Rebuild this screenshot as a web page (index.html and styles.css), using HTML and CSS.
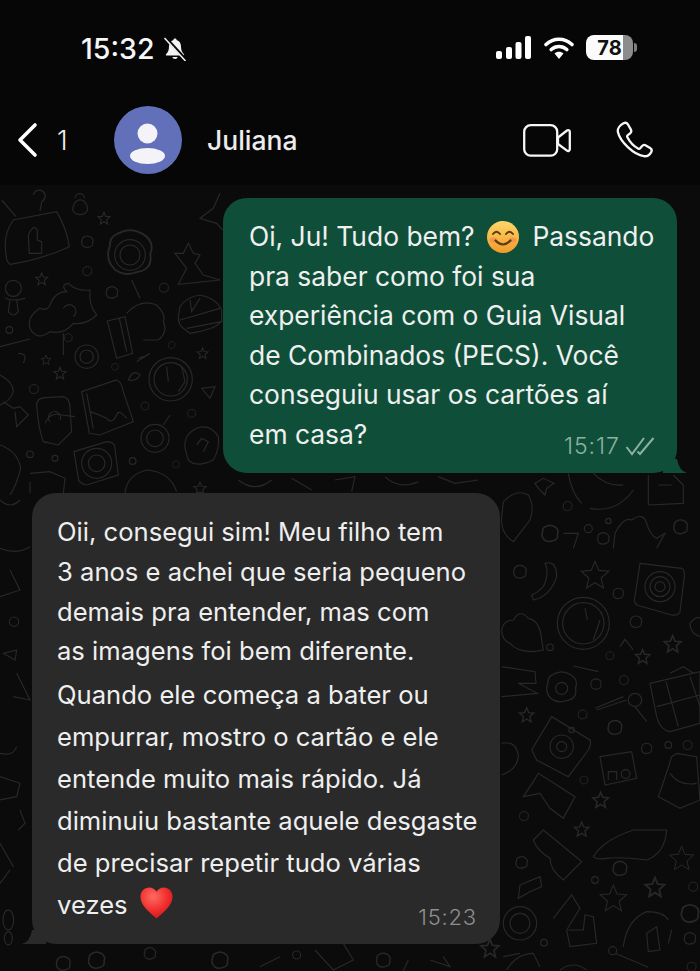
FILE: index.html
```html
<!DOCTYPE html>
<html lang="pt-BR">
<head>
    <meta charset="UTF-8">
    <meta name="viewport" content="width=device-width, initial-scale=1.0">
    <title>Juliana</title>
    <link rel="stylesheet" href="styles.css">
</head>
<body>
    <div class="phone">
        <div class="top-area">
            <div class="status-bar">
                <div class="status-left">
                    <span class="status-time">15:32</span>
                    <svg class="bell" viewBox="0 0 24 24" width="24" height="24">
                        <path d="M12 1.500c-.9 0-1.500.6-1.600 1.400C7.600 3.700 6 6 6 9.500c0 3.800-1 5.700-3 7.700-.5.500-.1 1.300.6 1.300h16.800c.7 0 1.100-.8.6-1.300-2-2-3-3.900-3-7.700C18 6 16.400 3.700 13.600 2.900c-.1-.8-.7-1.400-1.600-1.400z" fill="#f4f4f4"/>
                        <path d="M9.300 20a2.800 2.800 0 0 0 5.400 0z" fill="#f4f4f4"/>
                        <path d="M2.500 .5 L23.500 23.500" stroke="#060606" stroke-width="3"/>
                        <path d="M1.500 1 L22.500 24" stroke="#f4f4f4" stroke-width="1.500"/>
                    </svg>
                </div>
                <div class="status-right">
                    <svg viewBox="0 0 35 23" width="35" height="23">
                        <rect x="0" y="15" width="6" height="8" rx="2" fill="#fff"/>
                        <rect x="10" y="11" width="6" height="12" rx="2" fill="#fff"/>
                        <rect x="19.500" y="6" width="6" height="17" rx="2" fill="#fff"/>
                        <rect x="29" y="0" width="6" height="23" rx="2" fill="#fff"/>
                    </svg>
                    <svg class="wifi" viewBox="0 0 30 23" width="30" height="23">
                        <path d="M2 8.500C9.500 1.500 20.500 1.500 28 8.500" fill="none" stroke="#fff" stroke-width="3.600" stroke-linecap="round"/>
                        <path d="M7.200 13.500C11.800 9.500 18.200 9.500 22.800 13.500" fill="none" stroke="#fff" stroke-width="3.600" stroke-linecap="round"/>
                        <path d="M10.500 17.500C13 15 17 15 19.500 17.500L15 23z" fill="#fff"/>
                    </svg>
                    <div class="battery">
                        <div class="battery-body"><span>78</span></div>
                        <div class="battery-tip"></div>
                    </div>
                </div>
            </div>
            <div class="chat-header">
                <svg class="back" viewBox="0 0 22 36" width="22" height="36">
                    <path d="M19 3 L4 18 L19 33" fill="none" stroke="#fff" stroke-width="3.600" stroke-linecap="round" stroke-linejoin="round"/>
                </svg>
                <span class="unread">1</span>
                <div class="avatar">
                    <svg viewBox="0 0 68 68" width="68" height="68">
                        <circle cx="33.500" cy="27.500" r="10" fill="#f3f3f8"/>
                        <ellipse cx="33.500" cy="50" rx="17.500" ry="8" fill="#f3f3f8"/>
                    </svg>
                </div>
                <span class="contact-name">Juliana</span>
                <div class="call-icons">
                    <svg viewBox="0 0 48 33" width="48" height="33">
                        <rect x="1.200" y="1.200" width="33" height="30.500" rx="6.500" fill="none" stroke="#f6f6f6" stroke-width="2.300"/>
                        <path d="M35 13.500 L44 6.500c1.200-.9 2.800-.2 2.800 1.300v17.500c0 1.500-1.600 2.200-2.800 1.300L35 20z" fill="none" stroke="#f6f6f6" stroke-width="2.300" stroke-linejoin="round"/>
                    </svg>
                    <svg viewBox="0 0 38 38" width="38" height="38">
                        <path d="M7.500 2.300c1.800-1 3.400-.5 4.400 1.100l2.900 5c.8 1.400.5 2.900-.7 3.900l-2.300 1.900c-.7.600-.8 1.300-.4 2.100 2.300 4.600 6.100 8.800 10.700 11.300.8.400 1.500.3 2.100-.4l1.900-2.200c1-1.200 2.500-1.400 3.800-.6l4.200 2.600c1.600 1 2 2.700 1 4.300-1.600 2.700-4.300 4.300-7.300 3.900C17.800 33.900 3.900 20.500 1.900 11.100 1.200 7.600 4.300 4 7.500 2.300z" fill="none" stroke="#f6f6f6" stroke-width="2.300" stroke-linejoin="round"/>
                    </svg>
                </div>
            </div>
        </div>

        <div class="chat">
            <!-- doodle wallpaper, coordinates are page px x3 per group -->
            <svg class="wallpaper" width="700" height="786" viewBox="0 185 700 786">
                <defs>
                    <path id="star" d="M0 -18 L5 -6 L18 -5 L8 4 L11 17 L0 10 L-11 17 L-8 4 L-18 -5 L-5 -6z"/>
                    <path id="blob" d="M-10 -14 Q0 -20 10 -14 Q20 -8 16 2 Q18 14 6 16 Q-4 20 -12 14 Q-20 6 -16 -4 Q-16 -12 -10 -14z"/>
                </defs>

                <!-- top left -->
                <g class="doodle" transform="translate(0 185) scale(.3333)">
                    <path d="M18 205 Q8 150 40 105 L170 80 Q200 130 208 185 Q120 225 30 238 Q18 230 18 205z"/>
                    <path d="M5 45 L48 95 M100 30 a18 18 0 1 1 25 20 L120 78"/>
                    <path d="M85 150 Q100 115 112 135 L112 165 L125 170 L125 205 L88 205z"/>
                    <path d="M218 75 a22 30 0 0 1 45 0 a25 25 0 0 1 -45 0z M225 40 a14 14 0 0 1 28 0"/>
                    <use href="#star" transform="translate(312 100)"/>
                    <use href="#blob" transform="translate(262 170)"/>
                    <use href="#blob" transform="translate(262 258) scale(.8)"/>
                    <use href="#star" transform="translate(125 282)"/>
                    <use href="#blob" transform="translate(336 322)"/>
                    <use href="#blob" transform="translate(492 308) scale(.8)"/>
                    <use href="#blob" transform="translate(390 200) scale(3.800)" class="thin"/>
                    <circle cx="390" cy="210" r="46"/>
                    <circle cx="390" cy="210" r="30"/>
                    <path d="M565 175 L580 205 L600 210 L585 235 L610 270 L660 285 L535 298 L560 250 L525 205 L550 205z"/>
                    <path d="M660 25 L640 70 L600 100 L650 115 L668 135"/>
                    <circle cx="40" cy="310" r="24"/>
                    <path d="M30 345 L25 380 Q40 400 55 380 L50 345 M15 340 Q40 350 75 340"/>
                    <path d="M90 430 Q80 395 120 370 Q140 380 150 360 Q165 320 200 320 Q180 300 205 295 Q230 320 270 315 Q265 360 290 390 Q260 420 220 415 Q190 450 150 440 Q110 470 90 430z"/>
                    <path d="M190 370 a20 20 0 1 1 30 25 M190 445 L190 510 M0 485 L90 462 M55 505 Q85 505 70 535"/>
                    <use href="#star" transform="translate(180 565)"/>
                    <use href="#blob" transform="translate(205 458) scale(.7)"/>
                    <use href="#star" transform="translate(138 525) scale(.8)"/>
                    <circle cx="260" cy="515" r="35"/>
                    <circle cx="260" cy="515" r="20"/>
                    <path d="M322 408 L375 395 L398 505 L350 520z M358 400 L380 500"/>
                    <path d="M380 385 Q420 340 470 360 Q500 390 490 410 Q505 440 475 465 L430 465 M395 285 L420 340"/>
                    <path d="M540 365 Q560 335 600 330 Q650 340 665 375 L665 410 Q640 435 570 445 L550 430 Q535 420 535 395z M540 405 L660 370 M560 430 L665 410 M570 345 L575 380 L600 340"/>
                    <circle cx="28" cy="435" r="10"/>
                    <use href="#blob" transform="translate(515 480) scale(.6)"/>
                    <use href="#star" transform="translate(608 505) scale(.9)"/>
                    <use href="#blob" transform="translate(345 545) scale(.6)"/>
                    <use href="#blob" transform="translate(102 612) scale(.8)"/>
                    <use href="#blob" transform="translate(435 663) scale(.7)"/>
                    <use href="#blob" transform="translate(575 685) scale(.7)"/>
                    <circle cx="90" cy="808" r="10"/>
                    <circle cx="165" cy="820" r="9"/>
                    <use href="#blob" transform="translate(528 838) scale(.6)"/>
                    <circle cx="398" cy="828" r="10"/>
                    <circle cx="512" cy="583" r="65"/>
                    <circle cx="512" cy="583" r="50"/>
                    <path d="M500 545 L505 590 M545 545 L555 590 L535 620"/>
                    <path d="M385 585 Q400 550 420 570 Q410 590 385 585z M410 530 L450 505 M415 520 L445 510 M605 610 L645 605 L630 640z"/>
                    <path d="M0 570 Q40 590 40 620 Q30 650 0 660 M10 650 L40 670 L60 665 L85 690 L50 725 L45 680"/>
                    <path d="M245 620 L350 585 Q365 590 370 620 L400 710 L300 750 L268 745 L245 620z M260 625 L280 730 M270 680 Q300 690 320 700 Q335 720 350 690 Q355 670 380 700"/>
                    <path d="M110 660 Q110 640 135 638 L190 635 Q210 640 210 670 L215 740 L175 780 L130 770 Q115 730 110 660z M135 715 Q150 680 185 690 L225 695 M150 710 a18 18 0 1 1 30 -5"/>
                    <path d="M222 800 L320 770 Q345 770 345 790 L355 870 L260 900 Q235 895 235 880z"/>
                    <circle cx="290" cy="835" r="45"/>
                    <circle cx="290" cy="835" r="25"/>
                    <circle cx="465" cy="760" r="42"/>
                    <circle cx="465" cy="760" r="25"/>
                    <path d="M490 720 L510 690"/>
                    <path d="M555 790 Q550 750 590 730 Q630 715 655 755 Q660 790 640 825 Q590 850 565 825z M590 780 L605 760 L625 770 L610 800"/>
                    <path d="M0 780 Q55 800 62 850 Q50 900 30 930 M90 890 L90 925 M90 865 L150 860 L195 880 L190 925 M375 925 Q380 870 440 855 Q510 860 530 920"/>
                    <use href="#star" transform="translate(600 910)"/>
                </g>

                <!-- right side, middle -->
                <g class="doodle" transform="translate(500 540) scale(.3333)">
                    <path d="M100 180 Q150 170 170 110 Q170 60 135 70 Q150 100 130 140 Q110 160 95 165z"/>
                    <use href="#blob" transform="translate(60 95) scale(1.100)"/>
                    <use href="#star" transform="translate(285 105) scale(2.300)" class="thin"/>
                    <use href="#blob" transform="translate(355 160) scale(.9)"/>
                    <path d="M420 70 L545 85 Q555 90 553 110 L540 215 Q535 228 515 225 L410 195 Q400 185 405 170z"/>
                    <circle cx="480" cy="140" r="45"/>
                    <circle cx="480" cy="140" r="30"/>
                    <circle cx="480" cy="140" r="15"/>
                    <circle cx="250" cy="250" r="78"/>
                    <circle cx="250" cy="250" r="62"/>
                    <path d="M255 205 L262 240 M300 240 L280 300"/>
                    <path d="M5 270 Q10 240 40 240 Q60 205 85 235 Q120 240 125 300 L130 330 L100 335 Q50 335 30 310 Q5 300 5 270z"/>
                    <circle cx="150" cy="322" r="10"/>
                    <use href="#blob" transform="translate(408 245)"/>
                    <use href="#star" transform="translate(518 312) scale(1.400)"/>
                    <path d="M570 250 Q590 225 600 235 M570 250 Q570 280 600 290 M360 320 L375 298 L400 330"/>
                    <use href="#blob" transform="translate(330 347) scale(.7)"/>
                    <use href="#star" transform="translate(428 350) scale(1.200)"/>
                    <path d="M5 380 L105 395 L108 430 L55 430 L112 460 L5 470"/>
                    <use href="#blob" transform="translate(185 440) scale(2.600)" class="thin"/>
                    <circle cx="185" cy="445" r="18"/>
                    <use href="#blob" transform="translate(288 432) scale(.9)"/>
                    <path d="M220 378 L295 395"/>
                    <use href="#blob" transform="translate(372 420) scale(.8)"/>
                    <path d="M450 430 L600 395 L600 550 L510 575 Q480 570 470 530z M498 425 L535 560 M470 500 L600 465 M570 410 L600 500 M510 400 L550 380 L580 400"/>
                    <path d="M285 505 L370 470 M290 510 L380 480 M405 500 L440 545"/>
                    <circle cx="405" cy="480" r="20"/>
                    <use href="#star" transform="translate(80 525) scale(1.200)"/>
                    <use href="#blob" transform="translate(248 523) scale(.8)"/>
                    <use href="#blob" transform="translate(345 562) scale(1.200)"/>
                    <path d="M95 630 L155 530 L270 600 Q275 615 265 630 L205 710 L110 660z"/>
                    <circle cx="185" cy="620" r="35"/>
                    <circle cx="185" cy="620" r="15"/>
                    <circle cx="215" cy="570" r="8"/>
                    <path d="M5 610 Q50 600 55 650 Q50 690 5 705"/>
                    <use href="#blob" transform="translate(440 625) scale(.9)"/>
                    <circle cx="505" cy="615" r="10"/>
                    <use href="#blob" transform="translate(563 615) scale(.8)"/>
                    <path d="M300 650 L395 635 L410 715 L315 735z M325 720 v-25 h25 v25"/>
                    <circle cx="377" cy="702" r="13"/>
                    <path d="M530 640 L590 650 L600 780 L540 805 L475 770 Q500 700 515 650z M510 700 Q540 740 590 730"/>
                    <path d="M115 700 L225 770 L190 835 L150 805 L120 760 L70 770 L100 725z"/>
                    <use href="#blob" transform="translate(252 720) scale(.7)"/>
                    <use href="#star" transform="translate(302 780) scale(1.300)"/>
                    <use href="#blob" transform="translate(72 828) scale(.8)"/>
                    <use href="#star" transform="translate(245 868) scale(1.200)"/>
                </g>

                <!-- right side, below the green bubble -->
                <g class="doodle" transform="translate(500 470) scale(.3333)">
                    <path d="M205 10 Q215 70 245 100 M400 60 Q350 130 270 115 M280 10 Q320 50 370 45"/>
                    <path d="M105 40 L130 25 L162 40 L140 55 L135 75 L115 55z"/>
                    <path d="M445 15 L445 105 L550 100 L550 45 L520 15 M475 45 L515 45"/>
                    <path d="M10 95 Q50 55 85 75 Q105 110 90 150 L40 215 Q0 190 5 140z"/>
                    <use href="#blob" transform="translate(203 108) scale(.8)"/>
                    <circle cx="265" cy="176" r="12"/>
                    <circle cx="325" cy="153" r="8"/>
                    <path d="M345 190 Q370 140 395 150 Q430 125 440 160 Q450 195 470 205 L495 190 L470 235 M345 190 L340 235"/>
                    <use href="#blob" transform="translate(310 205)"/>
                    <use href="#blob" transform="translate(150 190) scale(1.400)"/>
                    <path d="M190 190 L235 190 L220 235"/>
                    <use href="#blob" transform="translate(542 170) scale(1.200)"/>
                </g>

                <!-- right side, bottom -->
                <g class="doodle" transform="translate(500 830) scale(.3333)">
                    <path d="M100 30 L130 0 L245 95 L190 150 Q150 120 150 85 Q110 60 100 30z"/>
                    <path d="M280 80 Q310 30 400 0 L500 0 Q495 70 440 90 Q360 80 320 85 Q290 90 280 80z"/>
                    <use href="#star" transform="translate(545 85) scale(2)" class="thin"/>
                    <use href="#star" transform="translate(465 172) scale(1.600)"/>
                    <use href="#star" transform="translate(340 205) scale(2.200)" class="thin"/>
                    <use href="#blob" transform="translate(65 97)"/>
                    <path d="M60 165 L120 140 L125 170 L90 185 L55 205z"/>
                    <use href="#blob" transform="translate(580 170) scale(.8)"/>
                    <circle cx="285" cy="150" r="10"/>
                    <circle cx="60" cy="280" r="50"/>
                    <circle cx="60" cy="280" r="30"/>
                    <use href="#blob" transform="translate(360 115) scale(1.200)"/>
                    <path d="M160 265 L215 195 L240 235 L200 300 L210 350 L290 340 L280 260 L255 255 L250 300 L205 300"/>
                    <path d="M370 350 Q380 270 440 245 Q490 245 505 270 M440 310 L470 290 L480 360 L445 365z M515 300 L505 340"/>
                    <use href="#blob" transform="translate(570 250) scale(1.500)"/>
                    <use href="#blob" transform="translate(570 325)"/>
                    <circle cx="132" cy="338" r="10"/>
                    <circle cx="338" cy="362" r="12"/>
                    <path d="M345 370 L445 412 M20 420 Q50 370 100 370 L120 410 M180 420 Q220 390 260 420"/>
                    <use href="#blob" transform="translate(575 410) scale(.8)"/>
                </g>

                <!-- left strip -->
                <g class="doodle" transform="translate(0 490) scale(.3333)">
                    <path d="M0 30 Q30 60 60 30 M0 175 Q50 195 90 170 M30 240 L60 300 L0 320 M10 490 L50 480 L45 510z M50 550 L90 630 L40 620 M0 790 Q40 800 50 770 M0 860 L60 880 L50 920 L0 930 M60 960 L75 1000 L55 1020 M0 1060 L40 1130 M0 1180 L30 1140"/>
                    <circle cx="42" cy="395" r="14"/>
                    <ellipse cx="25" cy="1290" rx="16" ry="30"/>
                    <ellipse cx="25" cy="1345" rx="12" ry="20"/>
                </g>

                <!-- bottom strip -->
                <g class="doodle" transform="translate(0 860) scale(.3333)">
                    <use href="#blob" transform="translate(190 310) scale(1.200)"/>
                    <use href="#blob" transform="translate(290 300) scale(1.400)"/>
                    <use href="#blob" transform="translate(450 280)"/>
                    <use href="#blob" transform="translate(660 300) scale(1.400)"/>
                    <path d="M780 320 L840 290 M945 270 L1000 330 L1060 300 L1030 250 M1225 300 L1210 333 M1290 300 L1350 320 L1330 290 M1510 290 L1560 280"/>
                    <circle cx="890" cy="285" r="12"/>
                    <use href="#blob" transform="translate(1150 300) scale(1.200)"/>
                    <use href="#star" transform="translate(1470 265) scale(1.500)"/>
                </g>

                <!-- between the bubbles -->
                <g class="doodle" transform="translate(225 470) scale(.3333)">
                    <path d="M40 30 Q90 70 140 30 M200 25 L260 60 M330 30 L390 20 L380 65 M480 20 Q520 60 580 35 M640 20 L690 40 L760 30"/>
                </g>
            </svg>

            <div class="bubble bubble-out">
                <p class="bubble-text">Oi, Ju! Tudo bem?
                    <svg class="emoji" viewBox="0 0 32 32" width="32" height="32">
                        <defs>
                            <linearGradient id="smile-fill" x1="0" y1="0" x2="0" y2="1">
                                <stop offset="0" stop-color="#fdd868"/>
                                <stop offset="1" stop-color="#f29a28"/>
                            </linearGradient>
                        </defs>
                        <circle cx="16" cy="16" r="16" fill="url(#smile-fill)"/>
                        <ellipse cx="6.500" cy="19" rx="4" ry="2.600" fill="#f28a4e" opacity=".7"/>
                        <ellipse cx="25.500" cy="19" rx="4" ry="2.600" fill="#f28a4e" opacity=".7"/>
                        <path d="M6 13q3.500-4.500 7 0M19 13q3.500-4.500 7 0" fill="none" stroke="#5b3a18" stroke-width="2" stroke-linecap="round"/>
                        <path d="M8.500 19.500q7.500 8 15 0" fill="none" stroke="#5b3a18" stroke-width="2.200" stroke-linecap="round"/>
                    </svg> Passando<br>pra saber como foi sua<br>experiência com o Guia Visual<br>de Combinados (PECS). Você<br>conseguiu usar os cartões aí<br>em casa?</p>
                <div class="meta meta-out">
                    <span>15:17</span>
                    <svg viewBox="0 0 30 20" width="30" height="20">
                        <path d="M1.500 11 L7 18 L19 2 M12.500 15.500 L15 18 L28.500 2" fill="none" stroke="#8db1a2" stroke-width="2"/>
                    </svg>
                </div>
                <svg class="tail tail-out" viewBox="0 0 24 14" width="24" height="14"><path d="M0 14 H24 Q16 12 14 0 L0 0z" fill="#0f4f3a"/></svg>
            </div>

            <div class="bubble bubble-in">
                <div class="bubble-text">
                    <span class="lines-tight">Oii, consegui sim! Meu filho tem<br>3 anos e achei que seria pequeno<br>demais pra entender, mas com<br>as imagens foi bem diferente.</span>
                    <span class="lines-loose">Quando ele começa a bater ou<br>empurrar, mostro o cartão e ele<br>entende muito mais rápido. Já<br>diminuiu bastante aquele desgaste<br>de precisar repetir tudo várias<br>vezes
                    <svg class="emoji heart" viewBox="0 0 34 32" width="33" height="32">
                        <defs>
                            <radialGradient id="heart-fill" cx="0.4" cy="0.3" r="0.8">
                                <stop offset="0" stop-color="#ff6b62"/>
                                <stop offset="0.6" stop-color="#ee2a2a"/>
                                <stop offset="1" stop-color="#c9141c"/>
                            </radialGradient>
                        </defs>
                        <path d="M17 32C8 24 .5 18 .5 9.500 .5 4 4.500 0 9.500 0c3.200 0 6 1.700 7.500 4.500C18.500 1.700 21.300 0 24.500 0c5 0 9 4 9 9.500C33.500 18 26 24 17 32z" fill="url(#heart-fill)"/>
                    </svg></span>
                </div>
                <div class="meta meta-in"><span>15:23</span></div>
                <svg class="tail tail-in" viewBox="0 0 24 14" width="24" height="14"><path d="M24 14 H0 Q8 12 10 0 L24 0z" fill="#2a2a2a"/></svg>
            </div>
        </div>
    </div>
</body>
</html>
```

FILE: styles.css
```css
html, body {
    margin: 0;
    padding: 0;
    background: #0a0a0a;
}

.phone {
    width: 700px;
    height: 971px;
    overflow: hidden;
    display: flex;
    flex-direction: column;
    font-family: 'Inter', 'Liberation Sans', sans-serif;
    color: #fff;
}

.top-area {
    height: 185px;
    background-color: #060606;
    flex-shrink: 0;
}

.status-bar {
    height: 60px;
    padding: 35px 63px 0 81px;
    box-sizing: border-box;
    display: flex;
    justify-content: space-between;
    align-items: flex-start;
}

.status-left {
    display: flex;
    align-items: center;
    gap: 8px;
}

.status-time {
    font-size: 28.5px;
    line-height: 27px;
    font-weight: 500;
    color: #f6f6f6;
}

.status-right {
    display: flex;
    align-items: center;
    gap: 13px;
}

.battery {
    display: flex;
    align-items: center;
    margin-left: -1px;
}

.battery-body {
    width: 47px;
    height: 25px;
    border-radius: 8px;
    background: linear-gradient(to right, #fbfbfb 78%, #8c8c8c 78%);
    display: flex;
    align-items: center;
    justify-content: center;
    color: #111;
    font-size: 20px;
    font-weight: 700;
}

.battery-tip {
    width: 3px;
    height: 9px;
    margin-left: 1px;
    border-radius: 0 3px 3px 0;
    background-color: #7d7d7d;
}

.chat-header {
    display: flex;
    align-items: center;
    padding: 46px 46px 0 16px;
}

.unread {
    font-size: 27px;
    font-weight: 300;
    color: #ededed;
    margin-left: 19px;
    width: 57px;
}

.avatar {
    width: 68px;
    height: 68px;
    border-radius: 50%;
    background-color: #6170b8;
    flex-shrink: 0;
}

.contact-name {
    margin-left: 25px;
    font-size: 26.5px;
    font-weight: 500;
    color: #ececec;
    flex: 1;
}

.call-icons {
    display: flex;
    align-items: center;
    gap: 45px;
}

.chat {
    position: relative;
    flex: 1;
    padding: 13px 23px 0 32px;
    display: flex;
    flex-direction: column;
    gap: 20px;
    background-color: #0b0b0b;
}

.wallpaper {
    position: absolute;
    top: 0;
    left: 0;
}

.doodle {
    fill: none;
    stroke: #282828;
    stroke-width: 3.5;
}

.doodle .thin {
    stroke-width: 1.5;
}

.bubble {
    position: relative;
    box-sizing: border-box;
    border-radius: 24px;
}

.bubble-out {
    align-self: flex-end;
    width: 454px;
    height: 275px;
    padding: 19px 0 0 26px;
    background-color: #0f4f3a;
}

.bubble-in {
    align-self: flex-start;
    width: 468px;
    height: 451px;
    padding: 19px 0 0 25px;
    background-color: #2a2a2a;
}

.bubble-text {
    margin: 0;
    font-size: 25.6px;
    line-height: 39.5px;
    color: #efefef;
    white-space: nowrap;
}

.bubble-out .bubble-text {
    font-size: 26.4px;
}

.lines-tight {
    display: block;
    line-height: 39.8px;
}

.lines-loose {
    display: block;
    margin-top: 2.5px;
    line-height: 42px;
}

.emoji {
    vertical-align: -7px;
    margin: 0 6px 0 5px;
}

.heart {
    margin-left: 5px;
    vertical-align: -5px;
}

.meta {
    position: absolute;
    display: flex;
    align-items: center;
    gap: 5px;
    font-weight: 300;
}

.meta-out {
    right: 22px;
    bottom: 13px;
    color: #8db1a2;
    font-size: 23px;
    letter-spacing: 1px;
}

.meta-in {
    right: 23px;
    bottom: 14px;
    color: #8f8f8f;
    font-size: 22px;
    letter-spacing: .8px;
}

.tail {
    position: absolute;
    bottom: 0;
}

.tail-out {
    right: -10px;
}

.tail-in {
    left: -10px;
}
```
